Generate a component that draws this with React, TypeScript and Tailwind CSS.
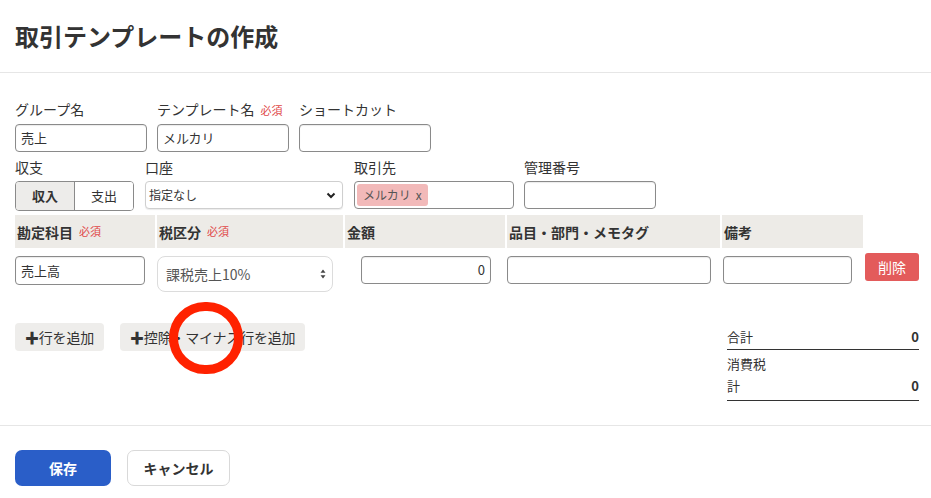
import React from 'react';

const font = "font-['Noto_Sans_CJK_JP','Noto_Sans',sans-serif]";

function Required() {
  return <span className="ml-[6px] text-[11px] font-normal text-[#e04848]">必須</span>;
}

function Label({ children }: { children: React.ReactNode }) {
  return <div className="mb-[5px] h-5 text-sm leading-5 text-[#333]">{children}</div>;
}

function TextBox({ value = '', className = '', align = 'left' }: { value?: string; className?: string; align?: 'left' | 'right' }) {
  return (
    <div
      className={`flex items-center rounded-[4px] border border-[#8a8a8a] bg-white px-[5px] text-[13px] text-[#333] shadow-[inset_0_1px_1px_rgba(0,0,0,0.08)] ${
        align === 'right' ? 'justify-end' : ''
      } ${className}`}
    >
      {value}
    </div>
  );
}

export default function App() {
  return (
    <div className={`relative w-[931px] min-h-[498px] bg-white text-[#333] ${font}`}>
      <header className="flex h-[73px] items-center border-b border-[#e6e6e6] px-[15px]">
        <h1 className="text-[24px] font-bold text-[#333]">取引テンプレートの作成</h1>
      </header>

      <section className="px-[15px] pt-[26px]">
        {/* row 1 */}
        <div className="flex gap-[10px]">
          <div className="w-[132px]">
            <Label>グループ名</Label>
            <TextBox value="売上" className="h-[28px]" />
          </div>
          <div className="w-[132px]">
            <Label>
              テンプレート名<Required />
            </Label>
            <TextBox value="メルカリ" className="h-[28px]" />
          </div>
          <div className="w-[132px]">
            <Label>ショートカット</Label>
            <TextBox className="h-[28px]" />
          </div>
        </div>

        {/* row 2 */}
        <div className="mt-[5px] flex">
          <div className="w-[119px]">
            <div className="mb-[4px] h-5 text-sm leading-5">収支</div>
            <div className="flex h-[30px] overflow-hidden rounded-[4px] border border-[#8a8a8a] text-[13px]">
              <div className="flex w-[59px] items-center justify-center border-r border-[#8a8a8a] bg-[#edecea] font-bold">収入</div>
              <div className="flex flex-1 items-center justify-center bg-white">支出</div>
            </div>
          </div>
          <div className="ml-[11px] w-[198px]">
            <div className="mb-[4px] h-5 text-sm leading-5">口座</div>
            <div className="flex h-[28px] items-center justify-between rounded-[4px] border border-[#cfcfcf] bg-white pl-[3px] pr-[6px] text-[12px] shadow-[0_1px_1px_rgba(0,0,0,0.08)]">
              <span>指定なし</span>
              <svg width="10" height="7" viewBox="0 0 10 7">
                <path d="M1.5 1.5 L5 5 L8.5 1.5" fill="none" stroke="#222" strokeWidth="2" />
              </svg>
            </div>
          </div>
          <div className="ml-[11px] w-[160px]">
            <div className="mb-[4px] h-5 text-sm leading-5">取引先</div>
            <div className="flex h-[28px] items-center rounded-[4px] border border-[#8a8a8a] bg-white px-[2px]">
              <span className="flex h-[22px] items-center rounded-[3px] bg-[#f2b9b9] px-[6px] text-[12px] text-[#555]">
                メルカリ<span className="ml-[5px]">x</span>
              </span>
            </div>
          </div>
          <div className="ml-[10px] w-[132px]">
            <div className="mb-[4px] h-5 text-sm leading-5">管理番号</div>
            <TextBox className="h-[28px]" />
          </div>
        </div>

        {/* table */}
        <div className="mt-[4px] grid grid-cols-[140px_186px_160px_213px_141px_54px] gap-x-[2px]">
          {[
            <>勘定科目<Required /></>,
            <>税区分<Required /></>,
            <>金額</>,
            <>品目・部門・メモタグ</>,
            <>備考</>,
          ].map((h, i) => (
            <div key={i} className="flex h-[33px] items-center bg-[#edebe7] px-[2px] text-sm font-bold">
              {h}
            </div>
          ))}
          <div />

          <div className="pt-[8px]">
            <TextBox value="売上高" className="h-[29px] w-[130px]" />
          </div>
          <div className="pt-[8px]">
            <div className="flex h-[36px] w-[176px] items-center justify-between rounded-[8px] border border-[#dcdcdc] bg-white pl-[8px] pr-[6px] text-sm text-[#555]">
              <span>課税売上10%</span>
              <svg width="6" height="10" viewBox="0 0 6 10">
                <path d="M3 0.5 L5.5 3.8 H0.5 Z M3 9.5 L5.5 6.2 H0.5 Z" fill="#444" />
              </svg>
            </div>
          </div>
          <div className="pl-[16px] pt-[8px]">
            <TextBox value="0" align="right" className="h-[28px] w-[130px]" />
          </div>
          <div className="pt-[8px]">
            <TextBox className="h-[28px] w-[204px]" />
          </div>
          <div className="pl-[1px] pt-[8px]">
            <TextBox className="h-[28px] w-[129px]" />
          </div>
          <div className="pt-[5px]">
            <button className="flex h-[28px] w-[54px] items-center justify-center rounded-[3px] bg-[#e35b5b] text-sm text-white">削除</button>
          </div>
        </div>

        {/* add rows + totals */}
        <div className="mt-[31px] flex items-start justify-between">
          <div className="flex gap-[16px]">
            <button className="flex h-[28px] items-center rounded-[4px] bg-[#eeedeb] px-[10px] text-sm tracking-[-0.2px] text-[#333]">
              <span className="font-bold">✚</span>行を追加
            </button>
            <button className="flex h-[28px] items-center rounded-[4px] bg-[#eeedeb] px-[10px] text-sm tracking-[-0.2px] text-[#333]">
              <span className="font-bold">✚</span>控除・マイナス行を追加
            </button>
          </div>
          <div className="mr-[-3px] w-[192px] text-[13px]">
            <div className="flex h-[27px] items-center justify-between border-b-[1.5px] border-[#333] pt-[1px]">
              <span>合計</span>
              <span className="font-bold">0</span>
            </div>
            <div className="flex justify-between border-b-[1.5px] border-[#333] pb-[3px] pt-[3px] leading-[22px]">
              <span className="w-[50px]">消費税計</span>
              <span className="self-end font-bold">0</span>
            </div>
          </div>
        </div>
      </section>

      <footer className="mt-[24px] border-t border-[#e6e6e6] px-[15px] pt-[24px]">
        <div className="flex gap-[16px]">
          <button className="flex h-[36px] w-[96px] items-center justify-center rounded-[7px] bg-[#2a5ec8] text-sm font-bold text-white">保存</button>
          <button className="flex h-[36px] w-[103px] items-center justify-center rounded-[7px] border border-[#d9d9d9] bg-white text-sm font-bold text-[#333]">キャンセル</button>
        </div>
      </footer>

      {/* annotation ring */}
      <div className="absolute left-[169px] top-[302px] h-[72px] w-[74px] rounded-full border-[9px] border-[#ff2200]" />
    </div>
  );
}
